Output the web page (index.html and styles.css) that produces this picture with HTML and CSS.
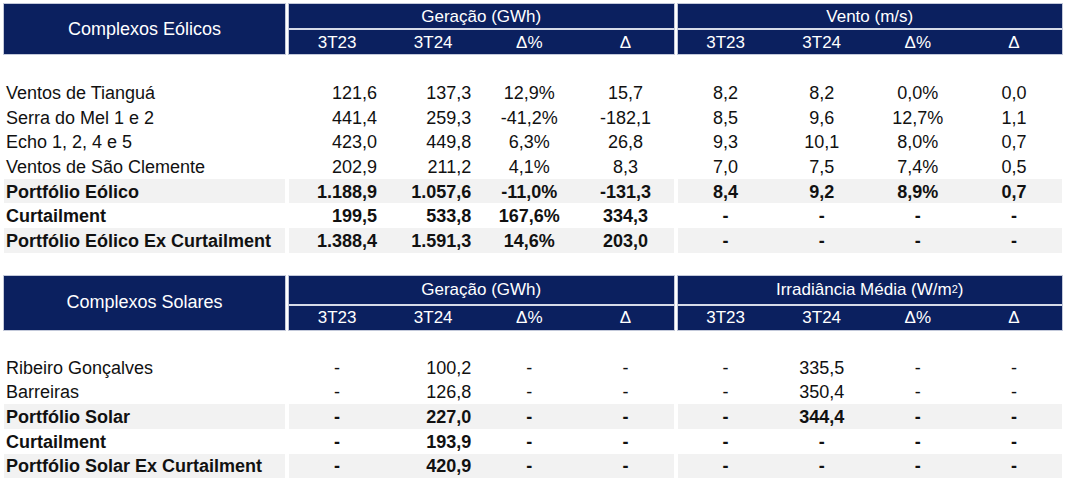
FILE: index.html
```html
<!DOCTYPE html>
<html lang="pt-BR">
<head>
<meta charset="utf-8">
<title>Geração</title>
<link rel="stylesheet" href="styles.css">
</head>
<body>
<div class="page">
  <section class="tbl">
    <div class="head">
      <div class="hlabel">Complexos Eólicos</div>
      <div class="hgroup">
        <div class="gtitle">Geração (GWh)</div>
        <div class="gsub"><span>3T23</span><span>3T24</span><span>Δ%</span><span>Δ</span></div>
      </div>
      <div class="hgroup">
        <div class="gtitle">Vento (m/s)</div>
        <div class="gsub"><span>3T23</span><span>3T24</span><span>Δ%</span><span>Δ</span></div>
      </div>
    </div>
    <div class="spacer"></div>
    <div class="row">
      <div class="label">Ventos de Tianguá</div>
      <div class="grp"><span class="r">121,6</span><span class="r2">137,3</span><span>12,9%</span><span>15,7</span></div>
      <div class="grp"><span>8,2</span><span>8,2</span><span>0,0%</span><span>0,0</span></div>
    </div>
    <div class="row">
      <div class="label">Serra do Mel 1 e 2</div>
      <div class="grp"><span class="r">441,4</span><span class="r2">259,3</span><span>-41,2%</span><span>-182,1</span></div>
      <div class="grp"><span>8,5</span><span>9,6</span><span>12,7%</span><span>1,1</span></div>
    </div>
    <div class="row">
      <div class="label">Echo 1, 2, 4 e 5</div>
      <div class="grp"><span class="r">423,0</span><span class="r2">449,8</span><span>6,3%</span><span>26,8</span></div>
      <div class="grp"><span>9,3</span><span>10,1</span><span>8,0%</span><span>0,7</span></div>
    </div>
    <div class="row">
      <div class="label">Ventos de São Clemente</div>
      <div class="grp"><span class="r">202,9</span><span class="r2">211,2</span><span>4,1%</span><span>8,3</span></div>
      <div class="grp"><span>7,0</span><span>7,5</span><span>7,4%</span><span>0,5</span></div>
    </div>
    <div class="row band bold">
      <div class="label">Portfólio Eólico</div>
      <div class="grp"><span class="r">1.188,9</span><span class="r2">1.057,6</span><span>-11,0%</span><span>-131,3</span></div>
      <div class="grp"><span>8,4</span><span>9,2</span><span>8,9%</span><span>0,7</span></div>
    </div>
    <div class="row bold">
      <div class="label">Curtailment</div>
      <div class="grp"><span class="r">199,5</span><span class="r2">533,8</span><span>167,6%</span><span>334,3</span></div>
      <div class="grp"><span>-</span><span>-</span><span>-</span><span>-</span></div>
    </div>
    <div class="row band bold">
      <div class="label">Portfólio Eólico Ex Curtailment</div>
      <div class="grp"><span class="r">1.388,4</span><span class="r2">1.591,3</span><span>14,6%</span><span>203,0</span></div>
      <div class="grp"><span>-</span><span>-</span><span>-</span><span>-</span></div>
    </div>
  </section>

  <section class="tbl second">
    <div class="head tall">
      <div class="hlabel">Complexos Solares</div>
      <div class="hgroup">
        <div class="gtitle">Geração (GWh)</div>
        <div class="gsub"><span>3T23</span><span>3T24</span><span>Δ%</span><span>Δ</span></div>
      </div>
      <div class="hgroup">
        <div class="gtitle">Irradiância Média (W/m<sup>2</sup>)</div>
        <div class="gsub"><span>3T23</span><span>3T24</span><span>Δ%</span><span>Δ</span></div>
      </div>
    </div>
    <div class="spacer s2"></div>
    <div class="row">
      <div class="label">Ribeiro Gonçalves</div>
      <div class="grp"><span>-</span><span class="r2">100,2</span><span>-</span><span>-</span></div>
      <div class="grp"><span>-</span><span>335,5</span><span>-</span><span>-</span></div>
    </div>
    <div class="row">
      <div class="label">Barreiras</div>
      <div class="grp"><span>-</span><span class="r2">126,8</span><span>-</span><span>-</span></div>
      <div class="grp"><span>-</span><span>350,4</span><span>-</span><span>-</span></div>
    </div>
    <div class="row band bold">
      <div class="label">Portfólio Solar</div>
      <div class="grp"><span>-</span><span class="r2">227,0</span><span>-</span><span>-</span></div>
      <div class="grp"><span>-</span><span>344,4</span><span>-</span><span>-</span></div>
    </div>
    <div class="row bold">
      <div class="label">Curtailment</div>
      <div class="grp"><span>-</span><span class="r2">193,9</span><span>-</span><span>-</span></div>
      <div class="grp"><span>-</span><span>-</span><span>-</span><span>-</span></div>
    </div>
    <div class="row band bold">
      <div class="label">Portfólio Solar Ex Curtailment</div>
      <div class="grp"><span>-</span><span class="r2">420,9</span><span>-</span><span>-</span></div>
      <div class="grp"><span>-</span><span>-</span><span>-</span><span>-</span></div>
    </div>
  </section>
</div>
</body>
</html>
```

FILE: styles.css
```css
* { box-sizing: border-box; }
html, body { margin: 0; padding: 0; background: #ffffff; }
body {
  font-family: "Liberation Sans", Arial, sans-serif;
  font-size: 18px;
  color: #111111;
}
.page {
  padding: 4px 6px 0 4px;
  width: 1068px;
}
.tbl { display: flex; flex-direction: column; }
.tbl.second { margin-top: 23px; }

.head {
  display: flex;
  gap: 4px;
  height: 50px;
}
.head.tall { height: 54px; }
.hlabel {
  width: 281px;
  flex: none;
  background: #0b205f;
  color: #ffffff;
  display: flex;
  align-items: center;
  justify-content: center;
  outline: 1px solid #c3c9da;
  font-size: 18px;
}
.hgroup {
  flex: 1;
  display: flex;
  flex-direction: column;
  outline: 1px solid #c3c9da;
}
.gtitle {
  flex: 1;
  background: #0b205f;
  color: #ffffff;
  display: flex;
  align-items: center;
  justify-content: center;
  border-bottom: 2px solid #d6dbe8;
  padding-top: 1px;
  font-size: 17px;
}
.gtitle sup { font-size: 11px; line-height: 0; position: relative; top: -1px; }
.gsub {
  height: 24px;
  flex: none;
  background: #0b205f;
  color: #ffffff;
  display: grid;
  grid-template-columns: repeat(4, 1fr);
  align-items: center;
  padding-top: 1px;
  font-size: 17px;
}
.gsub span { text-align: center; }

.spacer { height: 26px; }
.spacer.s2 { height: 25px; }

.row {
  display: flex;
  gap: 4px;
  height: 24.7px;
  align-items: stretch;
}
.label {
  width: 281px;
  flex: none;
  padding-left: 2px;
  padding-top: 2px;
  display: flex;
  align-items: center;
  white-space: nowrap;
}
.grp {
  flex: 1;
  display: grid;
  grid-template-columns: repeat(4, 1fr);
  align-items: center;
  padding-top: 2px;
}
.grp span { text-align: center; }
.grp span.r { text-align: right; padding-right: 8px; }
.grp span.r2 { text-align: right; padding-right: 10px; }
.band .label, .band .grp { background: #f2f2f2; }
.bold { font-weight: bold; }
```
